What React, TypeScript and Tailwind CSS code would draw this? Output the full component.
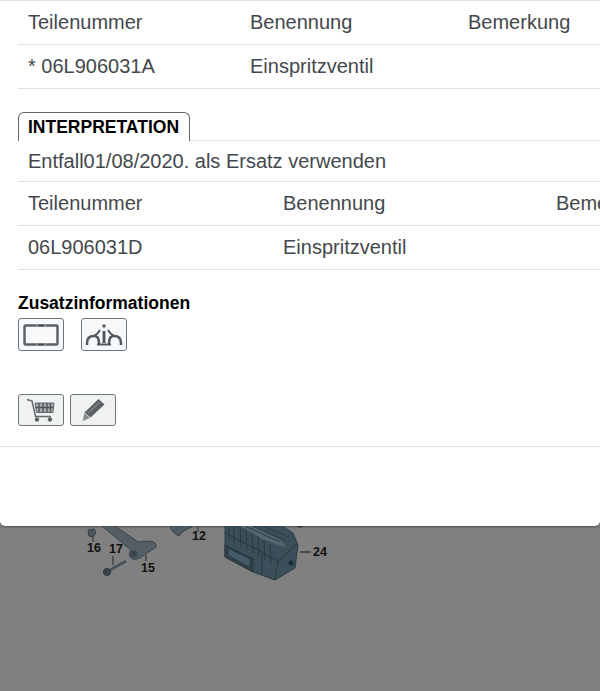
const firstRows = [
  ['Teilenummer', 'Benennung', 'Bemerkung'],
  ['* 06L906031A', 'Einspritzventil', ''],
];

const secondRows = [
  ['Teilenummer', 'Benennung', 'Bemerkung'],
  ['06L906031D', 'Einspritzventil', ''],
];

function PartRows({ rows, columns }: { rows: string[][]; columns: string }) {
  return (
    <div className="w-[760px]">
      {rows.map((row, i) => (
        <div key={i} className={`grid h-[44px] items-center border-b border-[#dee2e6] ${columns}`}>
          {row.map((cell, j) => (
            <div key={j} className="px-[10px] whitespace-nowrap">
              {cell}
            </div>
          ))}
        </div>
      ))}
    </div>
  );
}

function IconButton({ children, tall }: { children: React.ReactNode; tall?: boolean }) {
  return (
    <button
      className={`flex w-[46px] items-center justify-center rounded-[3px] border border-[#6c757d] ${
        tall ? 'h-[33px] bg-[#f8f9fa]' : 'h-[32px] bg-[#f0f2f1]'
      }`}
    >
      {children}
    </button>
  );
}

function Diagram() {
  return (
    <svg width="600" height="165" viewBox="0 526 600 165" className="block">
      {/* bracket 15 */}
      <path d="M102 526 L115 526 L138 542 L150 541 Q157 542 156 547 L140 558 Q133 561 130 557 Q128 553 131 550 Z" fill="#545f65" stroke="#384349" strokeWidth="1" />
      <ellipse cx="134" cy="554" rx="3.5" ry="3.5" fill="#39454b" />
      {/* nut 16 */}
      <path d="M88 530 L94 529 L96 533 L93 537 L89 536 Z" fill="#4a575d" stroke="#333e44" />
      <path d="M93 537 V542" stroke="#333" />
      {/* bolt 17 */}
      <path d="M110 570 L126 561" stroke="#46525a" strokeWidth="3" />
      <path d="M113 556 V565" stroke="#222" />
      <circle cx="107" cy="572" r="3.5" fill="#3b474d" stroke="#2c353a" />
      <path d="M146 555 V561" stroke="#222" />
      {/* part 12 */}
      <path d="M170 526 Q172 533 179 536 Q183 530 192 527 V526 Z" fill="#4e5b62" stroke="#39454b" />
      <path d="M198 526 V532" stroke="#333" />
      {/* tip above 24 */}
      <path d="M295 526 L303 526 L301 528 Z" fill="#333" />
      {/* housing 24 */}
      <path d="M225 526 L225 557 L253 572 L275 580 L295 568 L298 545 L293 533 L282 526 Z" fill="#3a4f5a" stroke="#2c3a42" />
      <path d="M240 526 L252 526 L282 541 L287 548 L262 539 Z" fill="#56666e" />
      <path d="M225 545 L253 559 L253 572 L225 557 Z" fill="#31424b" stroke="#28363e" />
      <path d="M228 548 L250 559 L250 568 L228 555 Z" fill="#445c68" stroke="#28363e" />
      <path d="M229 526 L229 541 M234 526 L234 544 M240 526 L241 547 M246 530 L247 550 M252 533 L253 553 M258 536 L259 556 M264 540 L265 560 M270 544 L271 564" stroke="#2a3840" fill="none" />
      <path d="M225 533 L262 552 L278 561 L297 544" stroke="#28363e" fill="none" />
      <path d="M245 526 L280 542 M252 526 L285 540 M262 526 L289 537" stroke="#2f3d44" fill="none" />
      <path d="M262 552 L262 574 M278 561 L275 580" stroke="#2c3a42" fill="none" />
      <circle cx="291" cy="563" r="2.5" fill="#222d33" />
      <path d="M300 552 H311" stroke="#3b3b3b" strokeWidth="1.5" />
      <g fontFamily="'Liberation Sans', Arial, sans-serif" fontSize="12.5" fontWeight="700" fill="#111">
        <text x="87" y="552">16</text>
        <text x="109" y="553">17</text>
        <text x="141" y="572">15</text>
        <text x="192" y="540">12</text>
        <text x="313" y="556">24</text>
      </g>
    </svg>
  );
}

export default function App() {
  return (
    <div className="h-[691px] w-[600px] overflow-hidden bg-[#808080] font-['Liberation_Sans',Arial,sans-serif]">
      <div className="h-[526px] overflow-hidden rounded-b-[5px] border-t border-[#dee2e6] bg-white shadow-[0_1px_2px_rgba(0,0,0,0.4)]">
        <div className="h-[445px] overflow-hidden pl-[18px] text-[20px] leading-[27px] text-[#44484c]">
          <PartRows rows={firstRows} columns="grid-cols-[222px_218px_1fr]" />

          <div className="mt-[23px] flex border-b border-[#dee2e6]">
            <div className="-mb-px h-[29px] rounded-t-[6px] border border-b-0 border-[#5f666c] bg-white pr-[10px] pl-[9px] text-[17.5px] leading-[28px] font-bold text-black">
              INTERPRETATION
            </div>
          </div>
          <div className="flex h-[41px] items-center border-b border-[#dee2e6] px-[10px] whitespace-nowrap">
            Entfall01/08/2020. als Ersatz verwenden
          </div>
          <PartRows rows={secondRows} columns="grid-cols-[255px_273px_1fr]" />

          <div className="mt-[23px] text-[17.5px] leading-[20px] font-bold text-black">Zusatzinformationen</div>
          <div className="mt-[5px] flex gap-[17px]">
            <IconButton tall>
              <svg width="38" height="24" viewBox="0 0 38 24" fill="none">
                <rect x="2.5" y="2.5" width="33" height="19" rx="1" stroke="#5b6063" strokeWidth="2.4" />
                <path d="M14 2.5 h2 M22 2.5 h2 M14 21.5 h2 M22 21.5 h2" stroke="#8d9295" strokeWidth="3" />
                <path d="M16 2.5 h6 M16 21.5 h6" stroke="#44494c" strokeWidth="1.6" />
              </svg>
            </IconButton>
            <IconButton tall>
              <svg width="40" height="24" viewBox="0 0 40 24" fill="none" stroke="#55595c" strokeWidth="2.6">
                <path d="M3 22 V20 Q3 13 10 13 Q15 13 15 20 V21" />
                <path d="M37 22 V20 Q37 13 30 13 Q25 13 25 20 V21" />
                <path d="M10 13 Q14 11 16 7 M30 13 Q26 11 24 7" strokeWidth="2" />
                <path d="M20 8 V20" strokeWidth="3" />
                <path d="M20 1.5 V4.5" strokeWidth="3" />
                <path d="M13 21.5 H27" strokeWidth="2" />
              </svg>
            </IconButton>
          </div>

          <div className="mt-[43px] flex gap-[6px]">
            <IconButton>
              <svg width="30" height="24" viewBox="0 0 30 24" fill="none" stroke="#64696c">
                <path d="M1 1.5 L6 3 L9.5 18.5 H25" strokeWidth="1.5" />
                <path d="M9 5 H28 L27 14.5 H10.5 Z" fill="#a9adaf" strokeWidth="1" />
                <path d="M13 5 V14.5 M17 5 V14.5 M21 5 V14.5 M24.5 5 V14.5 M9.5 9.5 H27.5" stroke="#50555a" strokeWidth="1.4" />
                <circle cx="11" cy="21.5" r="1.8" fill="#55595c" />
                <circle cx="24" cy="21.5" r="1.8" fill="#55595c" />
              </svg>
            </IconButton>
            <IconButton>
              <svg width="26" height="26" viewBox="0 0 26 26">
                <path d="M18.5 2 L24.5 7.5 L10.5 20.5 L4.5 15.5 Z" fill="#5c6164" />
                <path d="M4.5 16 L10 21 L2.5 24 Z" fill="#888d90" />
                <path d="M8.5 15.5 L20 5" stroke="#9ea3a5" strokeWidth="1" />
              </svg>
            </IconButton>
          </div>
        </div>
        <div className="border-t border-[#dee2e6]" />
      </div>
      <Diagram />
    </div>
  );
}
